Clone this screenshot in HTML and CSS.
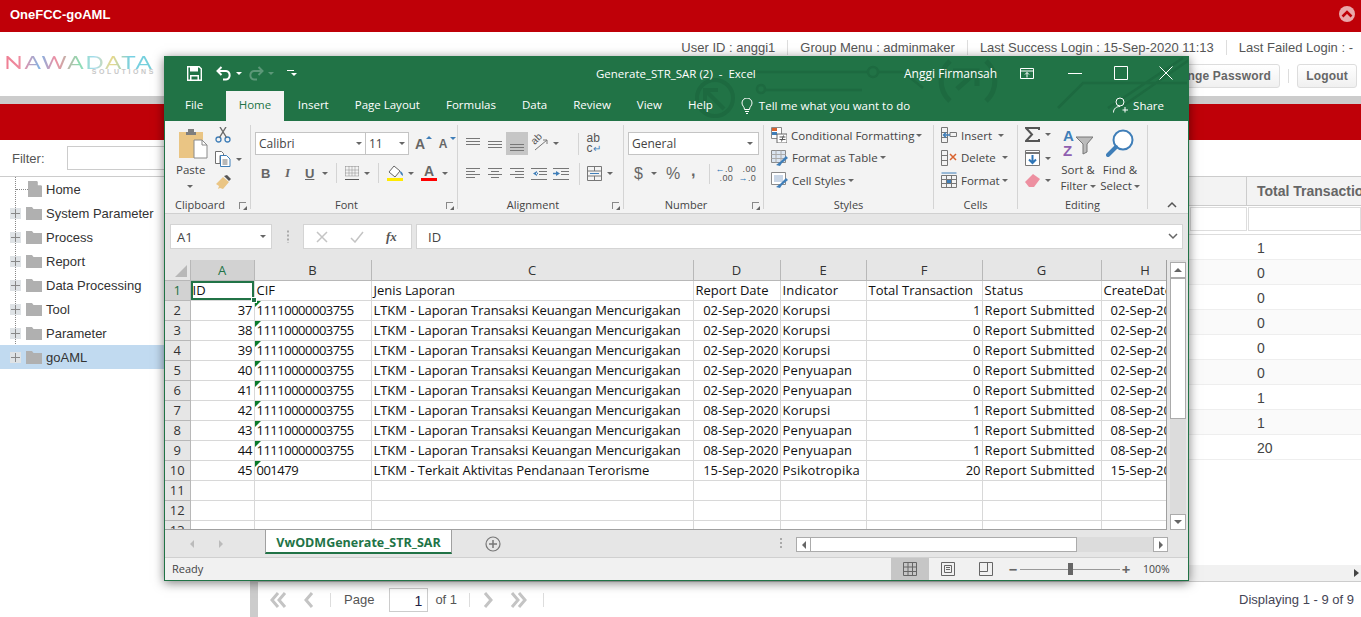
FILE: index.html
```html
<!DOCTYPE html>
<html lang="en">
<head>
    <meta charset="UTF-8">
    <meta name="viewport" content="width=device-width, initial-scale=1.0">
    <title>OneFCC-goAML</title>
    <link rel="stylesheet" href="styles.css">
</head>
<body>
    <!-- Web app behind the Excel window -->
    <div class="app">
        <div class="topbar">
            <span class="app-name">OneFCC-goAML</span>
            <span class="collapse-btn"><svg width="12" height="10" viewBox="0 0 12 10"><path d="M1.5 7.500 6 3l4.500 4.500" fill="none" stroke="#bf0008" stroke-width="2.600"/></svg></span>
        </div>
        <div class="header">
            <div class="logo">
                <span class="logo-main">NAWADATA</span>
                <span class="logo-sub">SOLUTIONS</span>
            </div>
            <div class="header-right">
                <div class="user-info">
                    <span>User ID : anggi1</span>
                    <span>Group Menu : adminmaker</span>
                    <span>Last Success Login : 15-Sep-2020 11:13</span>
                    <span>Last Failed Login : -</span>
                </div>
                <div class="user-actions">
                    <button class="web-btn">Change Password</button>
                    <i class="action-sep"></i>
                    <button class="web-btn">Logout</button>
                </div>
            </div>
        </div>
        <div class="strip"></div>
        <div class="redbar"></div>
        <div class="content">
            <div class="sidebar">
                <div class="filter-row">
                    <label>Filter:</label>
                    <input class="filter-input" type="text">
                </div>
                <ul class="tree">
                    <li class="tree-item"><i class="tree-leaf"></i><svg class="doc-icon" width="14" height="16" viewBox="0 0 14 16"><path d="M0 0h9l5 5v11H0z" fill="#b0b0b0"/><path d="M9.800 0 14 4.200H9.800z" fill="#fff"/></svg><span>Home</span></li>
                    <li class="tree-item"><i class="tree-plus"></i><svg class="folder-icon" width="16" height="13" viewBox="0 0 16 13"><path d="M0 0h6l1.500 2H16v11H0z" fill="#b0b0b0"/></svg><span>System Parameter</span></li>
                    <li class="tree-item"><i class="tree-plus"></i><svg class="folder-icon" width="16" height="13" viewBox="0 0 16 13"><path d="M0 0h6l1.500 2H16v11H0z" fill="#b0b0b0"/></svg><span>Process</span></li>
                    <li class="tree-item"><i class="tree-plus"></i><svg class="folder-icon" width="16" height="13" viewBox="0 0 16 13"><path d="M0 0h6l1.500 2H16v11H0z" fill="#b0b0b0"/></svg><span>Report</span></li>
                    <li class="tree-item"><i class="tree-plus"></i><svg class="folder-icon" width="16" height="13" viewBox="0 0 16 13"><path d="M0 0h6l1.500 2H16v11H0z" fill="#b0b0b0"/></svg><span>Data Processing</span></li>
                    <li class="tree-item"><i class="tree-plus"></i><svg class="folder-icon" width="16" height="13" viewBox="0 0 16 13"><path d="M0 0h6l1.500 2H16v11H0z" fill="#b0b0b0"/></svg><span>Tool</span></li>
                    <li class="tree-item"><i class="tree-plus"></i><svg class="folder-icon" width="16" height="13" viewBox="0 0 16 13"><path d="M0 0h6l1.500 2H16v11H0z" fill="#b0b0b0"/></svg><span>Parameter</span></li>
                    <li class="tree-item selected"><i class="tree-plus"></i><svg class="folder-icon" width="16" height="13" viewBox="0 0 16 13"><path d="M0 0h6l1.500 2H16v11H0z" fill="#b0b0b0"/></svg><span>goAML</span></li>
                </ul>
            </div>
            <div class="splitter"></div>
            <div class="main">
                <div class="grid-area">
                    <div class="grid-head">
                        <div class="col-rest"></div>
                        <div class="col-total">Total Transaction</div>
                    </div>
                    <div class="grid-filter">
                        <div class="col-rest"><i class="grid-input"></i></div>
                        <div class="col-total"><i class="grid-input"></i></div>
                    </div>
                    <div class="grid-row"><div class="col-rest"></div><div class="col-total">1</div></div>
                    <div class="grid-row"><div class="col-rest"></div><div class="col-total">0</div></div>
                    <div class="grid-row"><div class="col-rest"></div><div class="col-total">0</div></div>
                    <div class="grid-row"><div class="col-rest"></div><div class="col-total">0</div></div>
                    <div class="grid-row"><div class="col-rest"></div><div class="col-total">0</div></div>
                    <div class="grid-row"><div class="col-rest"></div><div class="col-total">0</div></div>
                    <div class="grid-row"><div class="col-rest"></div><div class="col-total">1</div></div>
                    <div class="grid-row"><div class="col-rest"></div><div class="col-total">1</div></div>
                    <div class="grid-row"><div class="col-rest"></div><div class="col-total">20</div></div>
                </div>
                <div class="grid-hscroll"><i class="hscroll-arrow"></i></div>
                <div class="pager">
                    <span class="pg-icon">
                        <svg width="17" height="16" viewBox="0 0 17 16"><path d="M8 1 2 8l6 7M15 1 9 8l6 7" fill="none" stroke="#c4c4c4" stroke-width="3"/></svg>
                    </span>
                    <span class="pg-icon">
                        <svg width="11" height="16" viewBox="0 0 11 16"><path d="M9 1 3 8l6 7" fill="none" stroke="#c4c4c4" stroke-width="3"/></svg>
                    </span>
                    <i class="pg-sep"></i>
                    <span class="pg-label">Page</span>
                    <span class="pg-input">1</span>
                    <span class="pg-of">of 1</span>
                    <i class="pg-sep"></i>
                    <span class="pg-icon">
                        <svg width="11" height="16" viewBox="0 0 11 16"><path d="m2 1 6 7-6 7" fill="none" stroke="#c4c4c4" stroke-width="3"/></svg>
                    </span>
                    <span class="pg-icon">
                        <svg width="17" height="16" viewBox="0 0 17 16"><path d="m2 1 6 7-6 7M9 1l6 7-6 7" fill="none" stroke="#c4c4c4" stroke-width="3"/></svg>
                    </span>
                    <i class="pg-sep"></i>
                    <span class="pg-display">Displaying 1 - 9 of 9</span>
                </div>
            </div>
        </div>
    </div>

    <!-- Excel window on top -->
    <div class="excel">
        <svg class="circuit" width="1025" height="65" viewBox="0 0 1025 65">
            <g fill="none" stroke="#1d6a40" stroke-width="2.500">
                <path d="M589 16H704M714 16H739L759 32"/>
                <circle cx="709" cy="16" r="5"/>
                <circle cx="597" cy="33" r="4"/>
                <path d="M601 34H698"/>
                <circle cx="551" cy="42" r="18" stroke-width="4"/>
                <path d="M541 47V34H554M541 34 560 53" stroke-width="4"/>
                <path d="M786 5A27 27 0 0 0 786 45M822 5A27 27 0 0 1 822 45" stroke-width="5"/>
                <path d="M789 15H813V30M813 15 793 33" stroke-width="5"/>
                <path d="M894 52 919 27H1023M944 52 1019 2M956 52 1025 4"/>
            </g>
        </svg>
        <div class="titlebar">
            <div class="qat">
                <svg class="qat-save" width="15" height="15" viewBox="0 0 15 15"><path d="M.7.700h11.500l2.100 2.100v11.500H.7z" fill="none" stroke="#fff" stroke-width="1.400"/><path d="M3 1h8v4.500H3zM3 9h9v5H3z" fill="#fff"/><path d="M4.500 10.500h6v3h-6z" fill="#217346"/></svg>
                <svg class="qat-undo" width="16" height="15" viewBox="0 0 16 15"><path d="M5.500 1 1.500 5l4 4M2 5h8a4.300 4.300 0 0 1 0 8.500H7" fill="none" stroke="#fff" stroke-width="2"/></svg>
                <i class="caret white"></i>
                <svg class="qat-redo" width="16" height="15" viewBox="0 0 16 15"><path d="m10.500 1 4 4-4 4M14 5H6a4.300 4.300 0 0 0 0 8.500h3" fill="none" stroke="#5c9878" stroke-width="2"/></svg>
                <i class="caret dim"></i>
                <span class="qat-custom"><i class="qat-line"></i><i class="caret white"></i></span>
            </div>
            <div class="doc-title">Generate_STR_SAR (2)&nbsp; -&nbsp; Excel</div>
            <div class="user-name">Anggi Firmansah</div>
            <div class="win-btns">
                <svg width="14" height="11" viewBox="0 0 14 11"><path d="M.5.500h13v10H.5zM.5 3h13M7 9.500V4.500M5 6.500l2-2 2 2" fill="none" stroke="#fff"/></svg>
                <svg width="14" height="14" viewBox="0 0 14 14"><path d="M0 7.500h14" stroke="#fff"/></svg>
                <svg width="14" height="14" viewBox="0 0 14 14"><path d="M.5.500h13v13H.5z" fill="none" stroke="#fff"/></svg>
                <svg width="14" height="14" viewBox="0 0 14 14"><path d="m.5.500 13 13M13.500.500l-13 13" stroke="#fff"/></svg>
            </div>
        </div>
        <div class="tabs">
            <span class="tab">File</span>
            <span class="tab active">Home</span>
            <span class="tab">Insert</span>
            <span class="tab">Page Layout</span>
            <span class="tab">Formulas</span>
            <span class="tab">Data</span>
            <span class="tab">Review</span>
            <span class="tab">View</span>
            <span class="tab">Help</span>
            <span class="tell-me">
                <svg width="12" height="16" viewBox="0 0 12 16"><path d="M3.500 11.500C3.500 8.500 1 8 1 5a5 5 0 0 1 10 0c0 3-2.500 3.500-2.500 6.500zM4 13.500h4M5 15.500h2" fill="none" stroke="#fff"/></svg>
                Tell me what you want to do
            </span>
            <span class="share">
                <svg width="16" height="16" viewBox="0 0 16 16"><circle cx="7" cy="5" r="4" fill="none" stroke="#fff"/><path d="M.5 15.500c0-4 3-6 6.500-6M12 10v5.500M9.500 13H15" fill="none" stroke="#fff"/></svg>
                Share
            </span>
        </div>

        <div class="ribbon">
            <div class="rb-group g-clip">
                <div class="rb-body clip-body">
                    <div class="paste">
                        <svg width="30" height="30" viewBox="0 0 30 30"><path d="M1 3h24v26H1z" fill="#eac584"/><path d="M8 3h2V0h6v3h2v3H8z" fill="#7e7e7e"/><path d="M16 11h8l5 5v13H16z" fill="#fff" stroke="#8a8a8a"/><path d="M24 11v5h5" fill="none" stroke="#8a8a8a"/></svg>
                        <span class="paste-text">Paste</span>
                        <i class="caret"></i>
                    </div>
                    <div class="clip-tools">
                        <svg width="16" height="16" viewBox="0 0 16 16"><circle cx="3.500" cy="12.500" r="2.500" fill="none" stroke="#3f7eb8" stroke-width="1.300"/><circle cx="12.500" cy="12.500" r="2.500" fill="none" stroke="#3f7eb8" stroke-width="1.300"/><path d="M4.500 10.500 11 0M11.500 10.500 5 0" stroke="#6a6a6a" stroke-width="1.400"/></svg>
                        <span class="tool-line"><svg width="16" height="16" viewBox="0 0 16 16"><path d="M.5.500h6l2 2v2H5v8H.5z" fill="#fff" stroke="#707070"/><path d="M5.500 4.500h6l3.500 3.500v7.500H5.500z" fill="#fff" stroke="#3f7eb8"/><path d="M7.500 9h5M7.500 11h5M7.500 13h5" stroke="#707070"/></svg><i class="caret"></i></span>
                        <svg width="16" height="15" viewBox="0 0 16 15"><path d="m9 1 3-1 4 4-2 2z" fill="#555"/><path d="m1 9 7-7 6 5-6 7-3-1-2 1 1-3z" fill="#eac584"/></svg>
                    </div>
                </div>
                <div class="rb-label launch">Clipboard<i class="launcher"></i></div>
            </div>

            <div class="rb-group g-font">
                <div class="rb-body stack">
                    <div class="tool-row font-row">
                        <span class="combo font-name">Calibri<i class="caret"></i></span>
                        <span class="combo font-size">11<i class="caret"></i></span>
                        <span class="grow-a big">A<i class="mini-up"></i></span>
                        <span class="grow-a small">A<i class="mini-down"></i></span>
                    </div>
                    <div class="tool-row fmt-row">
                        <b class="fmt f-b">B</b>
                        <i class="fmt f-i">I</i>
                        <u class="fmt f-u">U</u>
                        <i class="caret"></i>
                        <i class="rb-sep"></i>
                        <svg class="i-border" width="14" height="14" viewBox="0 0 14 14"><path d="M.5.500h13M.5 4h13M.5 7h13M.5 10h13M.5.500v10M4 .500v10M7 .500v10M10 .500v10M13.500.500v10" stroke="#8a8a8a" stroke-dasharray="1 1"/><path d="M0 13.500h14" stroke="#555"/></svg>
                        <i class="caret"></i>
                        <i class="rb-sep"></i>
                        <svg class="i-fill" width="17" height="16" viewBox="0 0 17 16"><path d="m2 7 5-6 6 5-5 6z" fill="#fff" stroke="#666"/><path d="M13 6c2 1 3 2 3 5-2-1-3-3-3-5z" fill="#3f7eb8"/><path d="M0 13h16v3H0z" fill="#ffea00"/></svg>
                        <i class="caret"></i>
                        <span class="font-color">A</span>
                        <i class="caret"></i>
                    </div>
                </div>
                <div class="rb-label launch">Font<i class="launcher"></i></div>
            </div>

            <div class="rb-group g-align">
                <div class="rb-body stack">
                    <div class="tool-row align-row">
                        <span class="al-icon"><svg width="14" height="14" viewBox="0 0 14 14"><path d="M0 1.500h14M0 4.500h14M0 7.500h14" stroke="#777"/></svg></span>
                        <span class="al-icon"><svg width="14" height="14" viewBox="0 0 14 14"><path d="M0 4.500h14M0 7.500h14M0 10.500h14" stroke="#777"/></svg></span>
                        <span class="al-icon on"><svg width="14" height="14" viewBox="0 0 14 14"><path d="M0 7.500h14M0 10.500h14M0 13.500h14" stroke="#777"/></svg></span>
                        <span class="al-icon wide">
                            <span class="orient-text">ab</span>
                            <svg width="16" height="14" viewBox="0 0 16 14"><path d="M3 13 15 3M15 3v4M15 3h-4" fill="none" stroke="#777"/></svg>
                        </span>
                        <i class="caret"></i>
                        <i class="rb-sep tall push"></i>
                        <span class="wrap-icon">ab<br>c<span class="wrap-arrow">↵</span></span>
                    </div>
                    <div class="tool-row align-row">
                        <span class="al-icon"><svg width="14" height="12" viewBox="0 0 14 12"><path d="M0 .500h14M0 3.500h9M0 6.500h14M0 9.500h9" stroke="#777"/></svg></span>
                        <span class="al-icon"><svg width="14" height="12" viewBox="0 0 14 12"><path d="M0 .500h14M3 3.500h8M0 6.500h14M3 9.500h8" stroke="#777"/></svg></span>
                        <span class="al-icon"><svg width="14" height="12" viewBox="0 0 14 12"><path d="M0 .500h14M5 3.500h9M0 6.500h14M5 9.500h9" stroke="#777"/></svg></span>
                        <span class="al-icon"><svg width="16" height="12" viewBox="0 0 16 12"><path d="M0 .500h16M8 3.500h8M8 6.500h8M0 11.500h16" stroke="#777"/><path d="M6 3 2 5.500 6 8zM5 4.800h2v1.500H5z" fill="#3f7eb8"/></svg></span>
                        <span class="al-icon"><svg width="16" height="12" viewBox="0 0 16 12"><path d="M0 .500h16M8 3.500h8M8 6.500h8M0 11.500h16" stroke="#777"/><path d="M3 3l4 2.500L3 8zM0 4.800h3v1.500H0z" fill="#3f7eb8"/></svg></span>
                        <i class="rb-sep tall"></i>
                        <svg class="i-merge" width="15" height="15" viewBox="0 0 15 15"><path d="M.5.500h14v14H.5zM.5 5h14M.5 10h14M7.500.500V5M7.500 10v4.500" fill="none" stroke="#777"/><path d="M3 7.500h9" stroke="#3f7eb8"/></svg>
                        <i class="caret"></i>
                    </div>
                </div>
                <div class="rb-label launch">Alignment<i class="launcher"></i></div>
            </div>

            <div class="rb-group g-num">
                <div class="rb-body stack">
                    <div class="tool-row num-row">
                        <span class="combo num-format">General<i class="caret"></i></span>
                    </div>
                    <div class="tool-row num-row">
                        <span class="num-sym dollar">$</span>
                        <i class="caret"></i>
                        <span class="num-sym pct">%</span>
                        <span class="num-sym comma">,</span>
                        <i class="rb-sep"></i>
                        <span class="dec-icon"><b class="blue">←</b>.0<br>.00</span>
                        <span class="dec-icon"><span class="dec-first">.00</span><br><b class="blue">→</b>.0</span>
                    </div>
                </div>
                <div class="rb-label launch">Number<i class="launcher"></i></div>
            </div>

            <div class="rb-group g-styles">
                <div class="rb-body list">
                    <div class="list-item">
                        <svg width="16" height="16" viewBox="0 0 16 16"><path d="M.5.500h10v11H.5z" fill="#fff" stroke="#8a8a8a"/><path d="M1 1h5v3H1z" fill="#d9622e"/><path d="M1 5h5v3H1z" fill="#3f7eb8"/><path d="M6 7h10v9H6z" fill="#fff" stroke="#666"/><path d="M8.500 10h6M8.500 12.500h6M12.500 8.500l-2 6" stroke="#555"/></svg>
                        <span>Conditional Formatting</span><i class="caret"></i>
                    </div>
                    <div class="list-item">
                        <svg width="17" height="16" viewBox="0 0 17 16"><path d="M.5.500h14v12H.5z" fill="#dbe5f1" stroke="#8a8a8a"/><path d="M5 .500v12M10 .500v12M.5 4.500h14M.5 8.500h14" stroke="#aaa"/><path d="m9 12 6-6 2 2-6 5-2 3-4-1z" fill="#3f7eb8"/></svg>
                        <span>Format as Table</span><i class="caret"></i>
                    </div>
                    <div class="list-item">
                        <svg width="17" height="16" viewBox="0 0 17 16"><path d="M.5.500h14v12H.5z" fill="#fff" stroke="#8a8a8a"/><path d="M3 3h9v7H3z" fill="#c9d6e6"/><path d="m9 12 6-6 2 2-6 5-2 3-4-1z" fill="#3f7eb8"/></svg>
                        <span>Cell Styles</span><i class="caret"></i>
                    </div>
                </div>
                <div class="rb-label">Styles</div>
            </div>

            <div class="rb-group g-cells">
                <div class="rb-body list">
                    <div class="list-item">
                        <svg width="16" height="16" viewBox="0 0 16 16"><path d="M.5.500h6v15h-6zM.5 5.500h6M.5 10.500h6M9 5.500h6.500v4H9z" fill="none" stroke="#777"/><path d="M9 8H3M5 5.500 2.500 8 5 10.500" fill="none" stroke="#3f7eb8" stroke-width="1.500"/></svg>
                        <span>Insert</span><i class="caret far"></i>
                    </div>
                    <div class="list-item">
                        <svg width="16" height="16" viewBox="0 0 16 16"><path d="M.5.500h6v15h-6zM.5 5.500h6M.5 10.500h6" fill="none" stroke="#777"/><path d="m9 4 6 6M15 4l-6 6" stroke="#d9622e" stroke-width="1.500"/></svg>
                        <span>Delete</span><i class="caret far"></i>
                    </div>
                    <div class="list-item">
                        <svg width="16" height="16" viewBox="0 0 16 16"><path d="M.5 3.500h15v12H.5zM.5 7.500h15M.5 11.500h15M5.500 3.500v12M10.500 3.500v12" fill="none" stroke="#777"/><path d="M.5 1h15" stroke="#3f7eb8"/><path d="M6 8h4v3H6z" fill="#3f7eb8"/></svg>
                        <span>Format</span><i class="caret"></i>
                    </div>
                </div>
                <div class="rb-label">Cells</div>
            </div>

            <div class="rb-group g-edit">
                <div class="rb-body edit-body">
                    <div class="edit-tools">
                        <span class="tool-line"><svg width="15" height="15" viewBox="0 0 15 15"><path d="M14 3V1H1l6 6.500L1 14h13v-2" fill="none" stroke="#555" stroke-width="2"/></svg><i class="caret"></i></span>
                        <span class="tool-line"><svg width="15" height="16" viewBox="0 0 15 16"><path d="M.5.500h14v15H.5z" fill="#fff" stroke="#777"/><path d="M.5 3h14" stroke="#777" stroke-width="2"/><path d="M7.500 5v8M4 9.500l3.500 3.500L11 9.500" fill="none" stroke="#2e75b6" stroke-width="2"/></svg><i class="caret"></i></span>
                        <span class="tool-line"><svg width="15" height="13" viewBox="0 0 15 13"><path d="m0 8 8-8 7 5-6 8H4z" fill="#ed8fa0"/></svg><i class="caret"></i></span>
                    </div>
                    <div class="big-tool">
                        <svg width="30" height="28" viewBox="0 0 30 28"><text class="sort-a" x="0" y="12">A</text><text class="sort-z" x="0" y="27">Z</text><path d="M13 8h17l-6 7v8l-4 2V15z" fill="#bbb" stroke="#777"/></svg>
                        <span>Sort &amp;<br>Filter<i class="caret"></i></span>
                    </div>
                    <div class="big-tool find">
                        <svg width="28" height="28" viewBox="0 0 28 28"><circle cx="17" cy="11" r="9.500" fill="#fff" stroke="#3f7eb8" stroke-width="2"/><path d="M10 18 2 26" stroke="#3f7eb8" stroke-width="4" stroke-linecap="round"/></svg>
                        <span>Find &amp;<br>Select<i class="caret"></i></span>
                    </div>
                </div>
                <div class="rb-label">Editing</div>
            </div>

            <div class="rb-end">
                <svg width="10" height="7" viewBox="0 0 10 7"><path d="M1 6l4-4 4 4" fill="none" stroke="#555" stroke-width="1.500"/></svg>
            </div>
        </div>

        <div class="formula-bar">
            <div class="name-box">A1<i class="caret"></i></div>
            <div class="fx-dots"></div>
            <div class="fx-box">
                <svg width="12" height="12" viewBox="0 0 12 12"><path d="m1 1 10 10M11 1 1 11" stroke="#c4c4c4" stroke-width="1.500"/></svg>
                <svg width="14" height="12" viewBox="0 0 14 12"><path d="m1 7 4 4 8-10" fill="none" stroke="#c4c4c4" stroke-width="1.500"/></svg>
                <span class="fx">fx</span>
            </div>
            <div class="fx-input">ID
                <svg width="10" height="7" viewBox="0 0 10 7"><path d="m1 1 4 4 4-4" fill="none" stroke="#666" stroke-width="1.500"/></svg>
            </div>
        </div>

        <div class="sheet-area">
            <div class="sheet-wrap">
                <table class="sheet">
                    <colgroup>
                        <col class="c-row"><col class="c-a"><col class="c-b"><col class="c-c"><col class="c-d"><col class="c-e"><col class="c-f"><col class="c-g"><col class="c-h">
                    </colgroup>
                    <thead>
                        <tr>
                            <th class="corner"><i class="corner-tri"></i></th>
                            <th class="hl">A</th><th>B</th><th>C</th><th>D</th><th>E</th><th>F</th><th>G</th><th>H</th>
                        </tr>
                    </thead>
                    <tbody>
                        <tr><th class="hl">1</th><td class="sel">ID<i class="sel-handle"></i></td><td>CIF</td><td>Jenis Laporan</td><td>Report Date</td><td>Indicator</td><td>Total Transaction</td><td>Status</td><td>CreateDate</td></tr>
                        <tr><th>2</th><td class="r">37</td><td class="tri">11110000003755</td><td>LTKM - Laporan Transaksi Keuangan Mencurigakan</td><td class="r">02-Sep-2020</td><td>Korupsi</td><td class="r">1</td><td>Report Submitted</td><td class="date">02-Sep-2020</td></tr>
                        <tr><th>3</th><td class="r">38</td><td class="tri">11110000003755</td><td>LTKM - Laporan Transaksi Keuangan Mencurigakan</td><td class="r">02-Sep-2020</td><td>Korupsi</td><td class="r">0</td><td>Report Submitted</td><td class="date">02-Sep-2020</td></tr>
                        <tr><th>4</th><td class="r">39</td><td class="tri">11110000003755</td><td>LTKM - Laporan Transaksi Keuangan Mencurigakan</td><td class="r">02-Sep-2020</td><td>Korupsi</td><td class="r">0</td><td>Report Submitted</td><td class="date">02-Sep-2020</td></tr>
                        <tr><th>5</th><td class="r">40</td><td class="tri">11110000003755</td><td>LTKM - Laporan Transaksi Keuangan Mencurigakan</td><td class="r">02-Sep-2020</td><td>Penyuapan</td><td class="r">0</td><td>Report Submitted</td><td class="date">02-Sep-2020</td></tr>
                        <tr><th>6</th><td class="r">41</td><td class="tri">11110000003755</td><td>LTKM - Laporan Transaksi Keuangan Mencurigakan</td><td class="r">02-Sep-2020</td><td>Penyuapan</td><td class="r">0</td><td>Report Submitted</td><td class="date">02-Sep-2020</td></tr>
                        <tr><th>7</th><td class="r">42</td><td class="tri">11110000003755</td><td>LTKM - Laporan Transaksi Keuangan Mencurigakan</td><td class="r">08-Sep-2020</td><td>Korupsi</td><td class="r">1</td><td>Report Submitted</td><td class="date">08-Sep-2020</td></tr>
                        <tr><th>8</th><td class="r">43</td><td class="tri">11110000003755</td><td>LTKM - Laporan Transaksi Keuangan Mencurigakan</td><td class="r">08-Sep-2020</td><td>Penyuapan</td><td class="r">1</td><td>Report Submitted</td><td class="date">08-Sep-2020</td></tr>
                        <tr><th>9</th><td class="r">44</td><td class="tri">11110000003755</td><td>LTKM - Laporan Transaksi Keuangan Mencurigakan</td><td class="r">08-Sep-2020</td><td>Penyuapan</td><td class="r">1</td><td>Report Submitted</td><td class="date">08-Sep-2020</td></tr>
                        <tr><th>10</th><td class="r">45</td><td class="tri">001479</td><td>LTKM - Terkait Aktivitas Pendanaan Terorisme</td><td class="r">15-Sep-2020</td><td>Psikotropika</td><td class="r">20</td><td>Report Submitted</td><td class="date">15-Sep-2020</td></tr>
                        <tr><th>11</th><td></td><td></td><td></td><td></td><td></td><td></td><td></td><td></td></tr>
                        <tr><th>12</th><td></td><td></td><td></td><td></td><td></td><td></td><td></td><td></td></tr>
                        <tr><th>13</th><td></td><td></td><td></td><td></td><td></td><td></td><td></td><td></td></tr>
                    </tbody>
                </table>
            </div>
            <div class="vscroll">
                <span class="sb-btn"><i class="tri-up"></i></span>
                <span class="sb-thumb"></span>
                <span class="sb-btn end"><i class="tri-down"></i></span>
            </div>
        </div>

        <div class="sheet-tabs">
            <span class="nav-arrows"><i class="tri-left dim"></i><i class="tri-right dim"></i></span>
            <span class="sheet-tab">VwODMGenerate_STR_SAR</span>
            <span class="add-sheet"><svg width="16" height="16" viewBox="0 0 16 16"><circle cx="8" cy="8" r="7" fill="none" stroke="#777" stroke-width="1.200"/><path d="M4 8h8M8 4v8" stroke="#777" stroke-width="1.500"/></svg></span>
            <span class="tab-grip"></span>
            <div class="hscroll">
                <span class="sb-btn"><i class="tri-left"></i></span>
                <span class="hs-thumb"></span>
                <span class="sb-btn end"><i class="tri-right"></i></span>
            </div>
        </div>

        <div class="statusbar">
            <span class="ready">Ready</span>
            <span class="view-btn on"><svg width="14" height="14" viewBox="0 0 14 14"><path d="M.5.500h13v13H.5zM.5 5h13M.5 9.500h13M5 .500v13M9.500 .500v13" fill="none" stroke="#666"/></svg></span>
            <span class="view-btn"><svg width="14" height="14" viewBox="0 0 14 14"><path d="M.5.500h13v13H.5zM3.500 3.500h7v7h-7zM5 5.500h4M5 7.500h4" fill="none" stroke="#666"/></svg></span>
            <span class="view-btn"><svg width="14" height="14" viewBox="0 0 14 14"><path d="M.5.500h13v13H.5zM.5 9.500h8M8.500.500v9" fill="none" stroke="#666"/></svg></span>
            <span class="zoom-btn minus">−</span>
            <span class="zoom-track"><i class="zoom-thumb"></i></span>
            <span class="zoom-btn plus">+</span>
            <span class="zoom-pct">100%</span>
        </div>
    </div>
</body>
</html>
```

FILE: styles.css
```css
* {
    margin: 0;
    padding: 0;
    box-sizing: border-box;
}

html, body {
    height: 617px;
    overflow: hidden;
}

body {
    font-family: "Liberation Sans", Arial, sans-serif;
    font-size: 13px;
    color: #444;
    background: #fff;
}

i {
    font-style: normal;
}

/* web app */
.app {
    height: 617px;
    display: flex;
    flex-direction: column;
}

.topbar {
    height: 32px;
    background: #bf0008;
    display: flex;
    align-items: center;
    justify-content: space-between;
    padding: 0 6px 4px 10px;
    color: #fff;
}

.app-name {
    font-size: 13px;
    font-weight: bold;
}

.collapse-btn {
    width: 16px;
    height: 16px;
    border-radius: 50%;
    background: #e9a7aa;
    display: flex;
    align-items: center;
    justify-content: center;
}

.header {
    height: 64px;
    display: flex;
    justify-content: space-between;
}

.logo {
    width: 154px;
    padding: 21px 0 0 0;
    display: flex;
    flex-direction: column;
    align-items: flex-end;
    line-height: 1;
}

.logo-main {
    font-family: Lato, sans-serif;
    font-weight: 400;
    font-size: 18px;
    letter-spacing: 1.200px;
    white-space: nowrap;
    transform: scaleX(1.350);
    transform-origin: right center;
    background: linear-gradient(90deg, #ef7d92, #ee8ea2 12%, #7fb5e6 24%, #ef8ea2 34%, #8ddcb0 50%, #a5dcf0 60%, #e8d88a 72%, #76d0e4 84%, #76d0d8);
    -webkit-background-clip: text;
    background-clip: text;
    color: transparent;
}

.logo-sub {
    font-size: 7px;
    font-weight: bold;
    letter-spacing: 2.600px;
    margin-right: -2px;
    color: #c8c8c8;
    margin-top: -3px;
}

.header-right {
    display: flex;
    flex-direction: column;
    align-items: flex-end;
}

.user-info {
    display: flex;
    height: 30px;
    align-items: center;
    padding: 0 8px 0 0;
    color: #555;
}

.user-info span + span {
    margin-left: 12px;
    padding-left: 12px;
    border-left: 1px solid #ddd;
}

.user-actions {
    display: flex;
    align-items: center;
    padding-right: 4px;
    margin-top: 2px;
}

.web-btn {
    height: 24px;
    padding: 0 8px;
    font-family: inherit;
    font-size: 12px;
    font-weight: bold;
    letter-spacing: 0.200px;
    color: #666;
    border: 1px solid #ddd;
    border-radius: 3px;
    background: linear-gradient(#fff, #f0f0f0);
}

.action-sep {
    width: 1px;
    height: 14px;
    background: #ddd;
    margin: 0 8px;
}

.strip {
    height: 8px;
    background: #ccc;
}

.redbar {
    height: 36px;
    background: #bf0008;
}

.content {
    flex: 1;
    display: flex;
    min-height: 0;
}

.sidebar {
    width: 250px;
}

.filter-row {
    height: 37px;
    padding: 0 0 0 12px;
    display: flex;
    align-items: center;
    border-bottom: 1px solid #ccc;
}

.filter-row label {
    width: 55px;
    color: #555;
}

.filter-input {
    width: 170px;
    height: 24px;
    border: 1px solid #ccc;
}

.tree {
    list-style: none;
    width: 165px;
    background-image: linear-gradient(#888 50%, transparent 50%);
    background-size: 1px 2px;
    background-repeat: repeat-y;
    background-position: 15px 0;
}

.tree-item {
    height: 24px;
    display: flex;
    align-items: center;
    color: #333;
}

.tree-item span {
    margin-left: 4px;
}

.tree-item.selected {
    background-color: #c1daf0;
}

.tree-leaf {
    width: 12px;
    margin-left: 16px;
    border-top: 1px dotted #888;
}

.doc-icon {
    flex: none;
}

.tree-plus {
    width: 11px;
    height: 11px;
    margin: 0 5px 0 10px;
    background: #dfe3e6;
    position: relative;
}

.tree-plus::before, .tree-plus::after {
    content: "";
    position: absolute;
    background: #888;
}

.tree-plus::before {
    left: 1px;
    right: 1px;
    top: 5px;
    height: 1px;
}

.tree-plus::after {
    top: 1px;
    bottom: 1px;
    left: 5px;
    width: 1px;
}

.folder-icon {
    flex: none;
}

.splitter {
    width: 8px;
    background: #ccc;
}

.main {
    flex: 1;
    min-width: 0;
    display: flex;
    flex-direction: column;
}

.grid-area {
    flex: 1;
    padding-top: 36px;
}

.col-rest {
    width: 989px;
    flex: none;
}

.col-total {
    flex: 1;
    padding-left: 10px;
    white-space: nowrap;
    overflow: hidden;
}

.grid-head {
    height: 30px;
    display: flex;
    align-items: center;
    background: #f3f3f3;
    border-bottom: 1px solid #ccc;
    border-top: 1px solid #ccc;
    font-size: 14px;
    font-weight: bold;
    color: #666;
}

.grid-head .col-rest {
    height: 100%;
    border-right: 1px solid #ccc;
}

.grid-filter {
    height: 29px;
    display: flex;
    border-bottom: 1px solid #ddd;
    padding-top: 1px;
}

.grid-filter .col-total {
    padding: 0 0 0 1px;
}

.grid-input {
    display: block;
    height: 24px;
    border: 1px solid #ddd;
    margin-left: auto;
    width: 57px;
}

.col-total .grid-input {
    width: 100%;
}

.grid-row {
    height: 25px;
    display: flex;
    align-items: center;
    border-bottom: 1px solid #eee;
    padding-top: 2px;
    font-size: 14px;
    color: #444;
}

.grid-row:nth-child(even) {
    background: #fafafa;
}

.grid-hscroll {
    height: 17px;
    background: #f1f1f1;
    border-bottom: 1px solid #ccc;
    display: flex;
    justify-content: flex-end;
    align-items: center;
    padding-right: 2px;
}

.hscroll-arrow {
    border-left: 5px solid #444;
    border-top: 4px solid transparent;
    border-bottom: 4px solid transparent;
}

.pager {
    height: 35px;
    display: flex;
    align-items: center;
    padding-left: 12px;
    font-size: 13px;
    color: #555;
}

.pg-icon {
    display: flex;
    margin-right: 16px;
}

.pg-sep {
    width: 1px;
    height: 14px;
    background: #ddd;
    margin-right: 13px;
}

.pg-label {
    margin-right: 15px;
}

.pg-input {
    width: 39px;
    height: 24px;
    border: 1px solid #ccc;
    text-align: right;
    padding: 4px 5px 0 0;
    font-size: 14px;
    color: #224;
    margin-right: 7px;
}

.pg-of {
    margin-right: 12px;
}

.pg-display {
    margin-left: auto;
    padding-right: 7px;
    color: #445;
}

/* excel window */
.excel {
    position: absolute;
    left: 164px;
    top: 56px;
    width: 1025px;
    height: 525px;
    background: #e6e6e6;
    border: 1px solid #217346;
    box-shadow: 0 2px 10px rgba(0, 0, 0, 0.5);
    display: flex;
    flex-direction: column;
    font-family: "Open Sans", "Noto Sans", sans-serif;
    font-size: 12px;
    color: #444;
    overflow: hidden;
}

.circuit {
    position: absolute;
    left: -1px;
    top: -1px;
    z-index: 1;
}

.titlebar {
    height: 34px;
    background: #217346;
    display: flex;
    align-items: center;
    padding-bottom: 2px;
    color: #fff;
    flex: none;
}

.titlebar > * {
    position: relative;
    z-index: 2;
}

.qat {
    width: 431px;
    padding-left: 22px;
    display: flex;
    align-items: center;
}

.qat-undo {
    margin-left: 14px;
}

.qat-redo {
    margin-left: 6px;
}

.qat-custom {
    margin-left: 13px;
    display: flex;
    flex-direction: column;
    gap: 2px;
}

.qat-custom .caret {
    margin-left: 0;
}

.qat-line {
    width: 7px;
    height: 1px;
    background: #fff;
}

.doc-title {
    width: 308px;
    font-size: 11.500px;
    white-space: nowrap;
}

.user-name {
    width: 116px;
    font-size: 12px;
    white-space: nowrap;
}

.win-btns {
    display: flex;
    gap: 32px;
    align-items: center;
}

.win-btns svg:nth-child(2) {
    margin-left: 2px;
}

.win-btns svg:nth-child(4) {
    margin-left: -1px;
}

.tabs {
    height: 30px;
    background: #217346;
    display: flex;
    align-items: stretch;
    padding-left: 7px;
    color: #fff;
    font-size: 11.500px;
    flex: none;
}

.tab {
    padding: 6px 13px 0;
    position: relative;
    z-index: 2;
}

.tab.active {
    background: #f3f3f3;
    color: #217346;
    margin-left: 10px;
    padding: 6px 12.500px 0;
    margin-right: 1px;
}

.tell-me {
    display: flex;
    align-items: center;
    gap: 6px;
    margin-left: 15px;
    padding-bottom: 1px;
    position: relative;
    z-index: 2;
}

.share {
    margin-left: auto;
    margin-right: 24px;
    display: flex;
    align-items: center;
    gap: 4px;
    padding-bottom: 2px;
    position: relative;
    z-index: 2;
}

/* ribbon */
.ribbon {
    height: 93px;
    background: #f3f3f3;
    border-bottom: 1px solid #d0d0d0;
    display: flex;
    flex: none;
    padding-top: 4px;
    position: relative;
    z-index: 2;
}

.rb-group {
    border-right: 1px solid #d4d4d4;
    display: flex;
    flex-direction: column;
    margin-bottom: 4px;
    flex: none;
}

.g-clip { width: 86px; }
.g-font { width: 207px; }
.g-align { width: 166px; }
.g-num { width: 140px; }
.g-styles { width: 170px; }
.g-cells { width: 84px; }
.g-edit { width: 130px; }

.rb-body {
    flex: 1;
    min-height: 0;
}

.rb-label {
    height: 17px;
    line-height: 17px;
    font-size: 11px;
    text-align: center;
    position: relative;
    color: #444;
    margin-bottom: -4px;
}

.rb-label.launch {
    padding-right: 15px;
}

.launcher {
    position: absolute;
    right: 4px;
    top: 6px;
    width: 7px;
    height: 7px;
    border-top: 1px solid #888;
    border-left: 1px solid #888;
}

.launcher::after {
    content: "";
    position: absolute;
    right: -1px;
    bottom: -1px;
    border-right: 4px solid #666;
    border-top: 4px solid transparent;
}

.caret {
    display: inline-block;
    width: 0;
    height: 0;
    border-left: 3.500px solid transparent;
    border-right: 3.500px solid transparent;
    border-top: 3.500px solid #666;
    flex: none;
}

.caret.white {
    border-top-color: #fff;
    margin-left: 4px;
}

.caret.dim {
    border-top-color: #5c9878;
    margin-left: 4px;
}

.stack {
    display: flex;
    flex-direction: column;
    padding-top: 7px;
}

.tool-row {
    display: flex;
    align-items: center;
}

.clip-body {
    display: flex;
    padding: 0 0 0 13px;
}

.paste {
    width: 37px;
    display: flex;
    flex-direction: column;
    align-items: flex-start;
    padding-top: 4px;
}

.paste-text {
    margin-top: 3px;
    margin-left: -2px;
    font-size: 11.500px;
    line-height: 16px;
}

.paste .caret {
    margin: 7px 0 0 9px;
}

.clip-tools {
    display: flex;
    flex-direction: column;
    gap: 8px;
    padding: 2px 0 0 0;
}

.tool-line {
    display: flex;
    align-items: center;
    gap: 5px;
}

/* font group */
.font-row {
    padding-left: 4px;
    height: 23px;
}

.combo {
    height: 23px;
    background: #fff;
    border: 1px solid #c4c4c4;
    display: flex;
    align-items: center;
    justify-content: space-between;
    padding: 0 3px 0 3px;
    font-size: 12px;
    flex: none;
}

.font-name {
    width: 111px;
}

.font-size {
    width: 43px;
    border-left: 0;
}

.grow-a {
    position: relative;
    font-family: "Liberation Sans", sans-serif;
    color: #666;
    font-weight: bold;
    margin-left: 6px;
    width: 26px;
}

.grow-a.big { font-size: 14px; }
.grow-a.small { font-size: 12px; width: 20px; margin-left: 0; }

.mini-up, .mini-down {
    position: absolute;
    left: 11px;
    top: 0;
    border-left: 3px solid transparent;
    border-right: 3px solid transparent;
}

.mini-up { border-bottom: 3px solid #3f7eb8; }
.mini-down { border-top: 3px solid #3f7eb8; }

.fmt-row {
    padding-left: 10px;
    margin-top: 7px;
    height: 22px;
}

.fmt {
    font-family: "Liberation Sans", sans-serif;
    font-size: 13px;
    font-weight: bold;
    color: #666;
    width: 22px;
    text-align: left;
    flex: none;
}

.f-i {
    font-family: "Liberation Serif", serif;
    font-style: italic;
    padding-left: 2px;
}

.f-u {
    width: 17px;
}

.rb-sep {
    width: 1px;
    height: 20px;
    background: #d4d4d4;
    margin: 0 8px;
    flex: none;
}

.rb-sep.tall {
    height: 22px;
    margin: 0 7px;
}

.rb-sep.tall.push {
    margin-left: 19px;
}

.i-border {
    margin-right: 5px;
}

.i-fill {
    margin-right: 4px;
}

.font-color {
    font-family: "Liberation Sans", sans-serif;
    font-weight: bold;
    font-size: 14px;
    line-height: 13px;
    width: 16px;
    text-align: center;
    color: #666;
    border-bottom: 3px solid #f00;
    margin: 0 5px 0 7px;
}

/* alignment group */
.align-row {
    padding-left: 4px;
    height: 23px;
}

.align-row + .align-row {
    margin-top: 7px;
}

.al-icon {
    width: 22px;
    height: 23px;
    display: flex;
    align-items: center;
    justify-content: center;
    flex: none;
}

.al-icon.on {
    background: #c6c6c6;
}

.al-icon.wide {
    width: 24.500px;
    position: relative;
}

.orient-text {
    position: absolute;
    left: 3px;
    top: 1px;
    font-family: "Liberation Sans", sans-serif;
    font-size: 10px;
    line-height: 12px;
    color: #555;
    transform: rotate(-45deg);
}

.wrap-icon {
    font-family: "Liberation Sans", sans-serif;
    font-size: 12px;
    line-height: 10px;
    color: #555;
    width: 26px;
    text-align: left;
    padding-left: 1px;
}

.wrap-arrow {
    color: #3f7eb8;
    font-size: 10px;
}

.i-merge {
    margin: 0 5px 0 0;
}

/* number group */
.num-row {
    padding-left: 4px;
    min-height: 23px;
}

.num-row + .num-row {
    margin-top: 7px;
    padding-left: 10px;
}

.num-format {
    width: 131px;
    padding-right: 5px;
}

.num-sym {
    font-family: "Liberation Sans", sans-serif;
    color: #666;
    font-size: 16px;
}

.dollar {
    width: 17px;
}

.pct {
    margin-left: 9px;
    width: 25px;
}

.comma {
    width: 18px;
    font-weight: bold;
    margin-top: -5px;
}

.num-row .rb-sep {
    margin: 0;
}

.dec-icon {
    font-family: "Liberation Sans", sans-serif;
    font-size: 9px;
    line-height: 9px;
    width: 23px;
    color: #555;
    text-align: right;
    letter-spacing: 0.300px;
    white-space: nowrap;
}

.blue {
    color: #2e75b6;
    font-size: 9px;
}

/* lists */
.list {
    display: flex;
    flex-direction: column;
    margin-top: -1px;
    padding: 0 0 0 7px;
    font-size: 11.500px;
}

.list-item {
    height: 22.500px;
    display: flex;
    align-items: center;
    gap: 4px;
    white-space: nowrap;
}

.list-item .caret {
    margin-left: -2px;
    border-width: 3px 3px 0;
}

.list-item .caret.far {
    margin-left: 2px;
}

.edit-body {
    display: flex;
    padding: 0 0 0 7px;
    font-size: 11.500px;
}

.edit-tools {
    display: flex;
    flex-direction: column;
    gap: 8px;
    width: 32px;
    padding-top: 2px;
}

.big-tool {
    width: 42px;
    display: flex;
    flex-direction: column;
    align-items: center;
    text-align: center;
    padding-top: 4px;
    line-height: 16px;
    white-space: nowrap;
}

.big-tool svg {
    margin-bottom: 5px;
}

.big-tool .caret {
    margin-left: 2px;
    vertical-align: 2px;
    border-width: 3px 3px 0;
}

.sort-a, .sort-z {
    font-family: "Liberation Sans", sans-serif;
    font-size: 15px;
    font-weight: bold;
}

.sort-a { fill: #3f7eb8; }
.sort-z { fill: #8f5fb0; }

.rb-end {
    flex: 1;
    display: flex;
    align-items: flex-end;
    justify-content: flex-end;
    padding: 0 11px 5px 0;
}

/* formula bar */
.formula-bar {
    height: 46px;
    flex: none;
    display: flex;
    padding: 10px 5px 11px 5px;
    font-size: 13px;
    color: #444;
}

.name-box {
    width: 102px;
    background: #fff;
    border: 1px solid #d4d4d4;
    display: flex;
    align-items: center;
    justify-content: space-between;
    padding: 0 5px 0 6px;
}

.fx-dots {
    width: 31px;
    background-image: linear-gradient(#aaa 50%, transparent 50%);
    background-size: 2px 4px;
    background-repeat: repeat-y;
    background-position: center;
    background-clip: content-box;
    padding: 6px 0;
}

.fx-box {
    width: 109px;
    background: #fff;
    border: 1px solid #d4d4d4;
    display: flex;
    align-items: center;
    gap: 22px;
    padding-left: 12px;
}

.fx {
    font-family: "Liberation Serif", serif;
    font-style: italic;
    font-weight: bold;
    color: #555;
    font-size: 13px;
}

.fx-input {
    flex: 1;
    margin-left: 4px;
    background: #fff;
    border: 1px solid #d4d4d4;
    display: flex;
    align-items: center;
    justify-content: space-between;
    padding: 0 4px 0 11px;
}

/* sheet */
.sheet-area {
    height: 270px;
    flex: none;
    display: flex;
}

.sheet-wrap {
    width: 1002px;
    height: 270px;
    overflow: hidden;
    border-bottom: 1px solid #a0a0a0;
    border-right: 1px solid #a0a0a0;
    background: #fff;
    flex: none;
}

.sheet {
    table-layout: fixed;
    width: 1024px;
    border-collapse: collapse;
    font-size: 13px;
    color: #111;
}

.c-row { width: 25px; }
.c-a { width: 64px; }
.c-b { width: 117px; }
.c-c { width: 322px; }
.c-d { width: 87px; }
.c-e { width: 86px; }
.c-f { width: 116px; }
.c-g { width: 119px; }
.c-h { width: 88px; }

.sheet th {
    height: 20px;
    background: #e6e6e6;
    font-weight: normal;
    border: 1px solid #b8b8b8;
    border-width: 0 1px 1px 0;
    font-size: 13px;
    color: #333;
    padding: 0;
}

.sheet th.hl {
    background: #d2d2d2;
    color: #217346;
}

.sheet td {
    height: 20px;
    padding: 0 1px 0 2px;
    border: 1px solid #d8d8d8;
    white-space: nowrap;
    overflow: hidden;
    position: relative;
}

.sheet td.r {
    text-align: right;
}

.sheet td.date {
    padding-left: 9px;
}

.sheet td:nth-child(4) {
    letter-spacing: -0.040px;
}

.sheet td:nth-child(6) {
    letter-spacing: 0.200px;
}

.sheet td:nth-child(8) {
    letter-spacing: 0.200px;
}

.sheet td.sel {
    box-shadow: inset 0 0 0 2px #217346;
    overflow: visible;
}

.sel-handle {
    position: absolute;
    right: -3px;
    bottom: -3px;
    width: 6px;
    height: 6px;
    background: #217346;
    border: 1px solid #fff;
    z-index: 2;
}

.sheet td.tri {
    letter-spacing: -0.500px;
}

.sheet td.tri::before {
    content: "";
    position: absolute;
    left: 0;
    top: 0;
    border-top: 6px solid #0a7a2a;
    border-right: 6px solid transparent;
}

.corner {
    position: relative;
}

.corner-tri {
    position: absolute;
    right: 3px;
    bottom: 3px;
    border-bottom: 12px solid #b8b8b8;
    border-left: 12px solid transparent;
}

.vscroll {
    width: 22px;
    padding: 2px 3px 0;
    display: flex;
    flex-direction: column;
    background: linear-gradient(90deg, #e6e6e6 3px, #dcdcdc 3px, #dcdcdc 19px, #e6e6e6 19px);
}

.sb-btn {
    width: 16px;
    height: 16px;
    background: #fff;
    border: 1px solid #ababab;
    display: flex;
    align-items: center;
    justify-content: center;
    flex: none;
}

.sb-thumb {
    height: 141px;
    background: #fff;
    border: 1px solid #ababab;
}

.vscroll .end {
    margin-top: auto;
}

.tri-up, .tri-down {
    border-left: 4px solid transparent;
    border-right: 4px solid transparent;
}

.tri-up { border-bottom: 4px solid #666; }
.tri-down { border-top: 4px solid #666; }

.tri-left, .tri-right {
    border-top: 4px solid transparent;
    border-bottom: 4px solid transparent;
}

.tri-left { border-right: 4px solid #666; }
.tri-right { border-left: 4px solid #666; }
.tri-left.dim { border-right-color: #bbb; }
.tri-right.dim { border-left-color: #bbb; }

/* tabs under the sheet */
.sheet-tabs {
    height: 28px;
    flex: none;
    display: flex;
    align-items: flex-start;
    border-bottom: 1px solid #d0d0d0;
}

.nav-arrows {
    width: 100px;
    height: 27px;
    display: flex;
    align-items: center;
    gap: 25px;
    padding-left: 25px;
}

.sheet-tab {
    width: 187px;
    height: 24px;
    background: #fff;
    border: 1px solid #a0a0a0;
    border-width: 0 1px;
    border-bottom: 2px solid #217346;
    text-align: center;
    color: #217346;
    font-weight: bold;
    font-size: 12.500px;
    line-height: 25px;
}

.add-sheet {
    margin: 6px 0 0 33px;
    display: flex;
}

.tab-grip {
    width: 2px;
    height: 12px;
    margin: 8px 0 0 279px;
    background-image: linear-gradient(#aaa 50%, transparent 50%);
    background-size: 2px 4px;
}

.hscroll {
    margin: 7px 0 0 14px;
    width: 372px;
    height: 15px;
    display: flex;
    background: #dcdcdc;
}

.hscroll .sb-btn {
    height: 15px;
    width: 15px;
}

.hs-thumb {
    width: 266px;
    background: #fff;
    border: 1px solid #ababab;
    border-left: 0;
}

.hscroll .end {
    margin-left: auto;
}

/* status bar */
.statusbar {
    flex: 1;
    background: #f1f1f1;
    display: flex;
    align-items: center;
    font-size: 11px;
    color: #444;
}

.ready {
    width: 726px;
    padding-left: 7px;
    padding-bottom: 1px;
}

.view-btn {
    width: 38px;
    height: 100%;
    display: flex;
    align-items: center;
    justify-content: center;
}

.view-btn.on {
    background: #c6c6c6;
}

.zoom-btn {
    text-align: center;
    font-size: 15px;
    font-weight: bold;
    color: #666;
    line-height: 1;
}

.zoom-btn.minus {
    width: 14px;
    margin-left: 1px;
}

.zoom-btn.plus {
    width: 12px;
}

.zoom-track {
    width: 100px;
    height: 1px;
    background: #999;
    position: relative;
}

.zoom-thumb {
    position: absolute;
    left: 48px;
    top: -6px;
    width: 5px;
    height: 12px;
    background: #666;
}

.zoom-pct {
    margin-left: 11px;
    font-size: 10.500px;
}
```
